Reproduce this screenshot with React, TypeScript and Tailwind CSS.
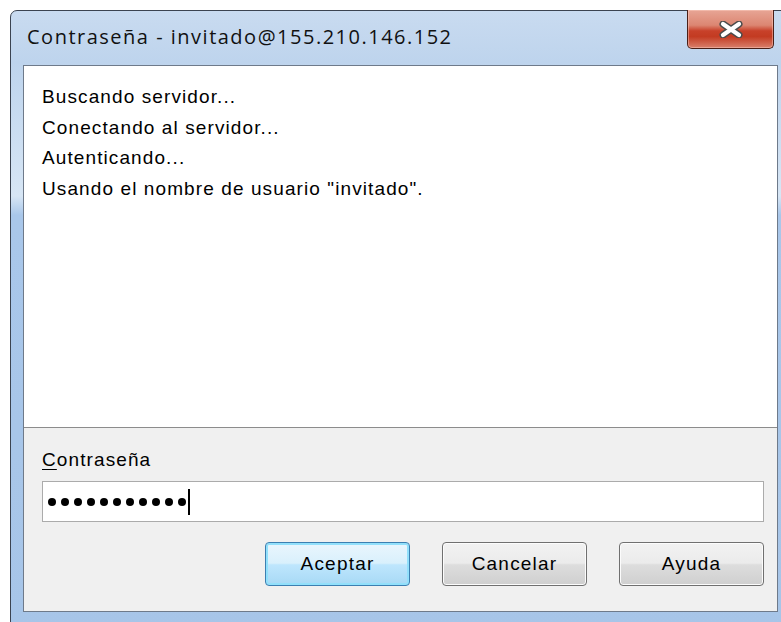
const lines = [
  "Buscando servidor...",
  "Conectando al servidor...",
  "Autenticando...",
  'Usando el nombre de usuario "invitado".',
];

function CloseButton() {
  return (
    <div className="absolute left-[676px] top-[-1px] w-[87px] h-[39px] rounded-b-[5px] border border-[#4a1f17] border-t-0 bg-[linear-gradient(180deg,#e7a595_0%,#dc8672_40%,#c8412a_55%,#c33b22_70%,#d9806c_100%)] shadow-[inset_0_0_0_1px_rgba(255,210,200,0.45)] flex items-center justify-center">
      <svg width="24" height="17" viewBox="0 0 24 17">
        <path d="M4 3 L20 14 M20 3 L4 14" stroke="#4b4b4b" strokeWidth="7" strokeLinecap="round" />
        <path d="M4 3 L20 14 M20 3 L4 14" stroke="#ffffff" strokeWidth="4.2" strokeLinecap="round" />
      </svg>
    </div>
  );
}

function DialogButton({ label, primary }: { label: string; primary?: boolean }) {
  return (
    <button
      className={
        primary
          ? "w-[145px] h-[44px] rounded-[4px] border border-[#3c7fb1] bg-[linear-gradient(180deg,#eaf6fd_0%,#d9f0fc_48%,#bee6fd_52%,#a7d9f5_100%)] shadow-[inset_0_0_0_2px_#92e0fb] text-[19px] tracking-[1.2px] text-black"
          : "w-[145px] h-[44px] rounded-[4px] border border-[#707070] bg-[linear-gradient(180deg,#f2f2f2_0%,#ebebeb_48%,#dddddd_52%,#cfcfcf_100%)] shadow-[inset_0_0_0_1px_#fcfcfc] text-[19px] tracking-[1.2px] text-black"
      }
    >
      {label}
    </button>
  );
}

export default function App() {
  return (
    <div className="w-[781px] h-[622px] bg-white overflow-hidden font-['Liberation_Sans',Arial,sans-serif]">
      <div className="relative ml-[10px] mt-[10px] w-[790px] h-[640px] rounded-t-[7px] border border-[#3b4350] bg-[linear-gradient(180deg,#c9dbf0_0%,#bed4ed_8%,#d7e6f5_29%,#a9c7ea_32%,#a7c5e8_100%)] pl-[12px]">
        <CloseButton />
        <div className="h-[54px] flex items-center pl-[4px] pb-[2px] font-['Open_Sans','Noto_Sans',sans-serif] text-[20px] tracking-[1.5px] text-[#111]">
          Contraseña - invitado@155.210.146.152
        </div>
        <div className="w-[755px] h-[547px] border border-[#6e7a8a] bg-[#f0f0f0] flex flex-col">
          <div className="h-[362px] bg-white border-b border-[#8c8c8c] pl-[18px] pt-[16px] text-[19px] tracking-[1.1px] text-black leading-[30.5px]">
            {lines.map((l) => (
              <div key={l}>{l}</div>
            ))}
          </div>
          <div className="pl-[18px] pr-[13px] pt-[20px] flex flex-col">
            <div className="text-[19px] tracking-[1.1px] text-black leading-[24px]">
              <span className="underline underline-offset-[3px]">C</span>ontraseña
            </div>
            <div className="mt-[9px] h-[41px] border border-[#ababab] bg-white flex items-center pl-[5px] gap-[5px]">
              {Array.from({ length: 11 }).map((_, i) => (
                <span key={i} className="w-[8px] h-[8px] rounded-full bg-black" />
              ))}
              <span className="w-[1.5px] h-[26px] bg-black -ml-[3px]" />
            </div>
            <div className="mt-[20px] flex justify-end gap-[32px]">
              <DialogButton label="Aceptar" primary />
              <DialogButton label="Cancelar" />
              <DialogButton label="Ayuda" />
            </div>
          </div>
        </div>
      </div>
    </div>
  );
}
